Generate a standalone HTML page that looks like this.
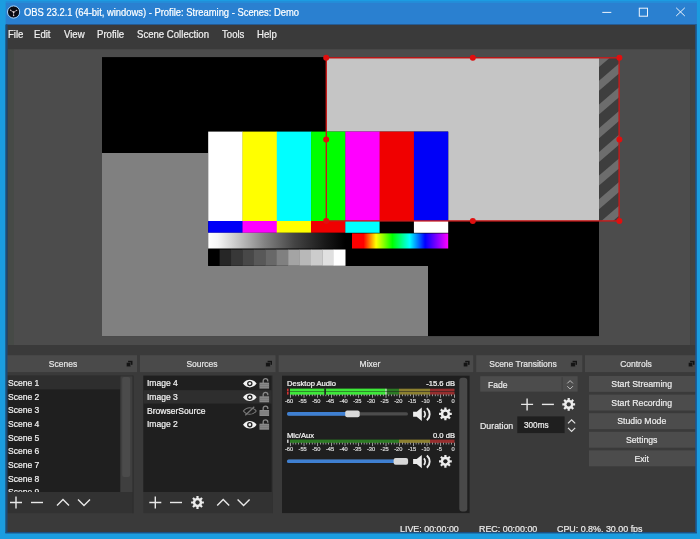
<!DOCTYPE html>
<html lang="en"><head><meta charset="utf-8"><title>OBS 23.2.1</title>
<style>
html,body{margin:0;padding:0}
body{width:700px;height:539px;position:relative;overflow:hidden;background:#3a3a3a;font-family:"Liberation Sans",sans-serif;color:#e6e6e6;font-size:8.8px;line-height:1}
span{position:absolute;white-space:nowrap;line-height:1;-webkit-text-stroke:0.22px}
svg{position:absolute;left:0;top:0}
#txt{position:absolute;left:0;top:0;width:700px;height:539px;overflow:hidden;will-change:transform}
.ic{stroke:#e8e8e8;stroke-width:1.4;fill:none}
</style></head><body>
<svg width="700" height="539" viewBox="0 0 700 539">
<rect x="8.00" y="49.00" width="682.40" height="296.00" fill="#4c4c4c"/>
<rect x="8.00" y="49.00" width="6.00" height="296.00" fill="#464a46"/>
<rect x="690.20" y="49.00" width="5.30" height="296.00" fill="#434343"/>
<rect x="102.00" y="57.10" width="497.00" height="279.00" fill="#000"/>
<rect x="102.00" y="153.00" width="326.00" height="183.10" fill="#808080"/>
<rect x="327.00" y="58.00" width="272.00" height="163.00" fill="#c5c5c5"/>
<rect x="208.20" y="131.60" width="240.00" height="134.40" fill="#000"/>
<rect x="208.20" y="131.60" width="34.59" height="89.60" fill="#ffffff"/>
<rect x="242.49" y="131.60" width="34.59" height="89.60" fill="#ffff00"/>
<rect x="276.77" y="131.60" width="34.59" height="89.60" fill="#00ffff"/>
<rect x="311.06" y="131.60" width="34.59" height="89.60" fill="#00ff00"/>
<rect x="345.34" y="131.60" width="34.59" height="89.60" fill="#ff00ff"/>
<rect x="379.63" y="131.60" width="34.59" height="89.60" fill="#f00000"/>
<rect x="413.91" y="131.60" width="34.29" height="89.60" fill="#0000f8"/>
<rect x="208.20" y="221.00" width="34.59" height="11.80" fill="#0000f8"/>
<rect x="242.49" y="221.00" width="34.59" height="11.80" fill="#ff00ff"/>
<rect x="276.77" y="221.00" width="34.59" height="11.80" fill="#ffff00"/>
<rect x="311.06" y="221.00" width="34.59" height="11.80" fill="#f00000"/>
<rect x="345.34" y="221.00" width="34.59" height="11.80" fill="#00ffff"/>
<rect x="379.63" y="221.00" width="34.59" height="11.80" fill="#000000"/>
<rect x="413.91" y="221.00" width="34.29" height="11.80" fill="#ffffff"/>
<defs><linearGradient id="gw"><stop offset="0" stop-color="#fff"/><stop offset="0.07" stop-color="#f6f6f6"/><stop offset="0.23" stop-color="#c0c0c0"/><stop offset="0.41" stop-color="#838383"/><stop offset="0.63" stop-color="#444"/><stop offset="0.85" stop-color="#191919"/><stop offset="1" stop-color="#000"/></linearGradient><linearGradient id="gr"><stop offset="0" stop-color="#f00"/><stop offset="0.12" stop-color="#f00"/><stop offset="0.25" stop-color="#ff0"/><stop offset="0.42" stop-color="#0f0"/><stop offset="0.6" stop-color="#0ff"/><stop offset="0.76" stop-color="#00f"/><stop offset="1" stop-color="#f0f"/></linearGradient><clipPath id="cs"><rect x="599" y="58" width="20" height="163"/></clipPath></defs>
<rect x="208.20" y="232.80" width="137.00" height="15.70" fill="url(#gw)"/>
<rect x="352.00" y="233.40" width="96.20" height="15.10" fill="url(#gr)"/>
<rect x="208.20" y="249.50" width="11.72" height="16.30" fill="rgb(0,0,0)"/>
<rect x="219.62" y="249.50" width="11.72" height="16.30" fill="rgb(38,38,38)"/>
<rect x="231.03" y="249.50" width="11.72" height="16.30" fill="rgb(56,56,56)"/>
<rect x="242.45" y="249.50" width="11.72" height="16.30" fill="rgb(72,72,72)"/>
<rect x="253.87" y="249.50" width="11.72" height="16.30" fill="rgb(88,88,88)"/>
<rect x="265.28" y="249.50" width="11.72" height="16.30" fill="rgb(104,104,104)"/>
<rect x="276.70" y="249.50" width="11.72" height="16.30" fill="rgb(128,128,128)"/>
<rect x="288.12" y="249.50" width="11.72" height="16.30" fill="rgb(164,164,164)"/>
<rect x="299.53" y="249.50" width="11.72" height="16.30" fill="rgb(184,184,184)"/>
<rect x="310.95" y="249.50" width="11.72" height="16.30" fill="rgb(204,204,204)"/>
<rect x="322.37" y="249.50" width="11.72" height="16.30" fill="rgb(224,224,224)"/>
<rect x="333.78" y="249.50" width="11.72" height="16.30" fill="rgb(255,255,255)"/>
<rect x="599.00" y="58.00" width="20.00" height="163.00" fill="#3e3e3e"/>
<g clip-path="url(#cs)" fill="#6d6d6d">
<polygon points="599,33.4 619,16.2 619,26.2 599,43.4"/>
<polygon points="599,57.1 619,39.9 619,49.9 599,67.1"/>
<polygon points="599,80.8 619,63.6 619,73.6 599,90.8"/>
<polygon points="599,104.5 619,87.3 619,97.3 599,114.5"/>
<polygon points="599,128.2 619,111.0 619,121.0 599,138.2"/>
<polygon points="599,151.9 619,134.7 619,144.7 599,161.9"/>
<polygon points="599,175.6 619,158.4 619,168.4 599,185.6"/>
<polygon points="599,199.3 619,182.1 619,192.1 599,209.3"/>
<polygon points="599,223.0 619,205.8 619,215.8 599,233.0"/>
<polygon points="599,246.7 619,229.5 619,239.5 599,256.7"/>
</g>
<rect x="326.3" y="57.8" width="292.8" height="163.1" fill="none" stroke="#c81a1a" stroke-width="1.4"/>
<circle cx="326.2" cy="57.7" r="3" fill="#e00f0f"/>
<circle cx="472.8" cy="57.7" r="3" fill="#e00f0f"/>
<circle cx="619.4" cy="57.7" r="3" fill="#e00f0f"/>
<circle cx="326.2" cy="139.4" r="3" fill="#e00f0f"/>
<circle cx="619.4" cy="139.4" r="3" fill="#e00f0f"/>
<circle cx="326.2" cy="220.9" r="3" fill="#e00f0f"/>
<circle cx="472.8" cy="220.9" r="3" fill="#e00f0f"/>
<circle cx="619.4" cy="220.9" r="3" fill="#e00f0f"/>
<rect x="0.00" y="0.00" width="700.00" height="24.60" fill="#2a80d0"/>
<rect x="0.00" y="0.00" width="700.00" height="1.60" fill="#1c9ce2"/>
<rect x="0.00" y="1.60" width="700.00" height="1.40" fill="#248cd8"/>
<rect x="5.60" y="24.00" width="691.00" height="1.20" fill="#245f9c"/>
<g transform="translate(13.6,12)"><circle r="6.1" fill="#0a0a12" stroke="#a8d4fa" stroke-width="1"/><path d="M0 0.2L-3 -1.7M0 0.2L3 -1.6M0 0.2V3.6" stroke="#a89a9e" stroke-width="0.9" stroke-linecap="round" fill="none"/><circle cx="0" cy="0.2" r="0.9" fill="#e8dcdc"/><circle cx="-3" cy="-1.7" r="0.7" fill="#c8bcbc"/><circle cx="3" cy="-1.6" r="0.7" fill="#c8bcbc"/><circle cx="0" cy="3.5" r="0.7" fill="#d8cccc"/></g>
<g stroke="#eef4fc" stroke-width="1" fill="none"><path d="M602.3 12.4h9"/><rect x="639.3" y="8.2" width="8.2" height="8"/><path d="M676.2 7.8l8.6 8.2M684.8 7.8l-8.6 8.2"/></g>
<rect x="6.00" y="24.90" width="690.00" height="24.30" fill="#3a3a3a"/>
<rect x="6.00" y="355.20" width="131.00" height="16.90" fill="#4a4a4a"/>
<g transform="translate(126.10000000000001,360.5)"><rect x="2" y="0.3" width="4.4" height="4" fill="#141414"/><rect x="0.2" y="2" width="4.4" height="4.3" fill="#141414" stroke="#4a4a4a" stroke-width="0.5"/></g>
<rect x="140.00" y="355.20" width="135.50" height="16.90" fill="#4a4a4a"/>
<g transform="translate(265.59999999999997,360.5)"><rect x="2" y="0.3" width="4.4" height="4" fill="#141414"/><rect x="0.2" y="2" width="4.4" height="4.3" fill="#141414" stroke="#4a4a4a" stroke-width="0.5"/></g>
<rect x="278.60" y="355.20" width="194.60" height="16.90" fill="#4a4a4a"/>
<g transform="translate(463.2,360.5)"><rect x="2" y="0.3" width="4.4" height="4" fill="#141414"/><rect x="0.2" y="2" width="4.4" height="4.3" fill="#141414" stroke="#4a4a4a" stroke-width="0.5"/></g>
<rect x="476.20" y="355.20" width="106.10" height="16.90" fill="#4a4a4a"/>
<g transform="translate(570.6,360.5)"><rect x="2" y="0.3" width="4.4" height="4" fill="#141414"/><rect x="0.2" y="2" width="4.4" height="4.3" fill="#141414" stroke="#4a4a4a" stroke-width="0.5"/></g>
<rect x="585.00" y="355.20" width="111.50" height="16.90" fill="#4a4a4a"/>
<g transform="translate(688.1,360.5)"><rect x="2" y="0.3" width="4.4" height="4" fill="#141414"/><rect x="0.2" y="2" width="4.4" height="4.3" fill="#141414" stroke="#4a4a4a" stroke-width="0.5"/></g>
<rect x="6.00" y="375.80" width="127.20" height="116.20" fill="#1f1f1f"/>
<rect x="6.00" y="375.80" width="114.30" height="13.60" fill="#2e2e2e"/>
<rect x="120.30" y="376.20" width="12.90" height="115.80" fill="#3f3f3f"/>
<rect x="122.2" y="377" width="8" height="100" rx="2" fill="#4b4b4b"/>
<rect x="143.30" y="375.60" width="128.50" height="116.40" fill="#1f1f1f"/>
<rect x="143.30" y="390.20" width="128.50" height="13.40" fill="#2e2e2e"/>
<g transform="translate(242.8,379.6)"><path d="M0.2 4C2.2 1.2 4.6 0.2 7 0.2S11.8 1.2 13.8 4C11.8 6.8 9.4 7.8 7 7.8S2.2 6.8 0.2 4Z" fill="#f2f2f2"/><circle cx="7" cy="4" r="2.7" fill="#1f1f1f"/><circle cx="7" cy="4" r="1.35" fill="#f2f2f2"/></g>
<g transform="translate(259,378.0)"><path d="M4.2 5V2.9C4.2 1.4 5.2 0.7 6.5 0.7S8.8 1.4 8.8 2.9V3.6" fill="none" stroke="#8a8a8a" stroke-width="1.3"/><rect x="0.5" y="4.6" width="9.6" height="6" fill="#8a8a8a"/><path d="M0.5 6.6h9.6M0.5 8.6h9.6" stroke="#6c6c6c" stroke-width="0.6"/></g>
<g transform="translate(242.8,393.3)"><path d="M0.2 4C2.2 1.2 4.6 0.2 7 0.2S11.8 1.2 13.8 4C11.8 6.8 9.4 7.8 7 7.8S2.2 6.8 0.2 4Z" fill="#f2f2f2"/><circle cx="7" cy="4" r="2.7" fill="#1f1f1f"/><circle cx="7" cy="4" r="1.35" fill="#f2f2f2"/></g>
<g transform="translate(259,391.7)"><path d="M4.2 5V2.9C4.2 1.4 5.2 0.7 6.5 0.7S8.8 1.4 8.8 2.9V3.6" fill="none" stroke="#8a8a8a" stroke-width="1.3"/><rect x="0.5" y="4.6" width="9.6" height="6" fill="#8a8a8a"/><path d="M0.5 6.6h9.6M0.5 8.6h9.6" stroke="#6c6c6c" stroke-width="0.6"/></g>
<g transform="translate(242.8,407.0)"><path d="M0.6 4C2.4 1.6 4.6 0.7 7 0.7S11.6 1.6 13.4 4C11.6 6.4 9.4 7.3 7 7.3S2.4 6.4 0.6 4Z" fill="none" stroke="#7a7a7a" stroke-width="1.1"/><path d="M2.5 8.2L11.5 -0.2" stroke="#7a7a7a" stroke-width="1.2"/></g>
<g transform="translate(259,405.4)"><path d="M4.2 5V2.9C4.2 1.4 5.2 0.7 6.5 0.7S8.8 1.4 8.8 2.9V3.6" fill="none" stroke="#8a8a8a" stroke-width="1.3"/><rect x="0.5" y="4.6" width="9.6" height="6" fill="#8a8a8a"/><path d="M0.5 6.6h9.6M0.5 8.6h9.6" stroke="#6c6c6c" stroke-width="0.6"/></g>
<g transform="translate(242.8,420.70000000000005)"><path d="M0.2 4C2.2 1.2 4.6 0.2 7 0.2S11.8 1.2 13.8 4C11.8 6.8 9.4 7.8 7 7.8S2.2 6.8 0.2 4Z" fill="#f2f2f2"/><circle cx="7" cy="4" r="2.7" fill="#1f1f1f"/><circle cx="7" cy="4" r="1.35" fill="#f2f2f2"/></g>
<g transform="translate(259,419.1)"><path d="M4.2 5V2.9C4.2 1.4 5.2 0.7 6.5 0.7S8.8 1.4 8.8 2.9V3.6" fill="none" stroke="#8a8a8a" stroke-width="1.3"/><rect x="0.5" y="4.6" width="9.6" height="6" fill="#8a8a8a"/><path d="M0.5 6.6h9.6M0.5 8.6h9.6" stroke="#6c6c6c" stroke-width="0.6"/></g>
<rect x="282.00" y="375.70" width="187.60" height="137.40" fill="#1f1f1f"/>
<rect x="459.3" y="377.8" width="8" height="133.8" rx="3" fill="#494949"/>
<rect x="290.00" y="388.70" width="109.00" height="2.70" fill="#2c7a24"/>
<rect x="399.00" y="388.70" width="31.00" height="2.70" fill="#8c8030"/>
<rect x="430.00" y="388.70" width="24.50" height="2.70" fill="#962e2e"/>
<rect x="290.00" y="388.70" width="95.50" height="2.70" fill="#3ee83a"/>
<rect x="385.50" y="388.70" width="1.00" height="2.70" fill="#fff"/>
<rect x="287.00" y="388.70" width="1.60" height="2.70" fill="#d03030"/>
<rect x="290.00" y="391.90" width="109.00" height="2.70" fill="#2c7a24"/>
<rect x="399.00" y="391.90" width="31.00" height="2.70" fill="#8c8030"/>
<rect x="430.00" y="391.90" width="24.50" height="2.70" fill="#962e2e"/>
<rect x="290.00" y="391.90" width="95.50" height="2.70" fill="#3ee83a"/>
<rect x="385.50" y="391.90" width="1.00" height="2.70" fill="#fff"/>
<rect x="287.00" y="391.90" width="1.60" height="2.70" fill="#d03030"/>
<rect x="290.00" y="394.40" width="0.70" height="3.40" fill="#d0d0d0"/>
<rect x="292.73" y="394.40" width="0.70" height="1.80" fill="#d0d0d0"/>
<rect x="295.47" y="394.40" width="0.70" height="1.80" fill="#d0d0d0"/>
<rect x="298.20" y="394.40" width="0.70" height="1.80" fill="#d0d0d0"/>
<rect x="300.93" y="394.40" width="0.70" height="1.80" fill="#d0d0d0"/>
<rect x="303.67" y="394.40" width="0.70" height="3.40" fill="#d0d0d0"/>
<rect x="306.40" y="394.40" width="0.70" height="1.80" fill="#d0d0d0"/>
<rect x="309.13" y="394.40" width="0.70" height="1.80" fill="#d0d0d0"/>
<rect x="311.87" y="394.40" width="0.70" height="1.80" fill="#d0d0d0"/>
<rect x="314.60" y="394.40" width="0.70" height="1.80" fill="#d0d0d0"/>
<rect x="317.33" y="394.40" width="0.70" height="3.40" fill="#d0d0d0"/>
<rect x="320.07" y="394.40" width="0.70" height="1.80" fill="#d0d0d0"/>
<rect x="322.80" y="394.40" width="0.70" height="1.80" fill="#d0d0d0"/>
<rect x="325.53" y="394.40" width="0.70" height="1.80" fill="#d0d0d0"/>
<rect x="328.27" y="394.40" width="0.70" height="1.80" fill="#d0d0d0"/>
<rect x="331.00" y="394.40" width="0.70" height="3.40" fill="#d0d0d0"/>
<rect x="333.73" y="394.40" width="0.70" height="1.80" fill="#d0d0d0"/>
<rect x="336.47" y="394.40" width="0.70" height="1.80" fill="#d0d0d0"/>
<rect x="339.20" y="394.40" width="0.70" height="1.80" fill="#d0d0d0"/>
<rect x="341.93" y="394.40" width="0.70" height="1.80" fill="#d0d0d0"/>
<rect x="344.67" y="394.40" width="0.70" height="3.40" fill="#d0d0d0"/>
<rect x="347.40" y="394.40" width="0.70" height="1.80" fill="#d0d0d0"/>
<rect x="350.13" y="394.40" width="0.70" height="1.80" fill="#d0d0d0"/>
<rect x="352.87" y="394.40" width="0.70" height="1.80" fill="#d0d0d0"/>
<rect x="355.60" y="394.40" width="0.70" height="1.80" fill="#d0d0d0"/>
<rect x="358.33" y="394.40" width="0.70" height="3.40" fill="#d0d0d0"/>
<rect x="361.07" y="394.40" width="0.70" height="1.80" fill="#d0d0d0"/>
<rect x="363.80" y="394.40" width="0.70" height="1.80" fill="#d0d0d0"/>
<rect x="366.53" y="394.40" width="0.70" height="1.80" fill="#d0d0d0"/>
<rect x="369.27" y="394.40" width="0.70" height="1.80" fill="#d0d0d0"/>
<rect x="372.00" y="394.40" width="0.70" height="3.40" fill="#d0d0d0"/>
<rect x="374.73" y="394.40" width="0.70" height="1.80" fill="#d0d0d0"/>
<rect x="377.47" y="394.40" width="0.70" height="1.80" fill="#d0d0d0"/>
<rect x="380.20" y="394.40" width="0.70" height="1.80" fill="#d0d0d0"/>
<rect x="382.93" y="394.40" width="0.70" height="1.80" fill="#d0d0d0"/>
<rect x="385.67" y="394.40" width="0.70" height="3.40" fill="#d0d0d0"/>
<rect x="388.40" y="394.40" width="0.70" height="1.80" fill="#d0d0d0"/>
<rect x="391.13" y="394.40" width="0.70" height="1.80" fill="#d0d0d0"/>
<rect x="393.87" y="394.40" width="0.70" height="1.80" fill="#d0d0d0"/>
<rect x="396.60" y="394.40" width="0.70" height="1.80" fill="#d0d0d0"/>
<rect x="399.33" y="394.40" width="0.70" height="3.40" fill="#d0d0d0"/>
<rect x="402.07" y="394.40" width="0.70" height="1.80" fill="#d0d0d0"/>
<rect x="404.80" y="394.40" width="0.70" height="1.80" fill="#d0d0d0"/>
<rect x="407.53" y="394.40" width="0.70" height="1.80" fill="#d0d0d0"/>
<rect x="410.27" y="394.40" width="0.70" height="1.80" fill="#d0d0d0"/>
<rect x="413.00" y="394.40" width="0.70" height="3.40" fill="#d0d0d0"/>
<rect x="415.73" y="394.40" width="0.70" height="1.80" fill="#d0d0d0"/>
<rect x="418.47" y="394.40" width="0.70" height="1.80" fill="#d0d0d0"/>
<rect x="421.20" y="394.40" width="0.70" height="1.80" fill="#d0d0d0"/>
<rect x="423.93" y="394.40" width="0.70" height="1.80" fill="#d0d0d0"/>
<rect x="426.67" y="394.40" width="0.70" height="3.40" fill="#d0d0d0"/>
<rect x="429.40" y="394.40" width="0.70" height="1.80" fill="#d0d0d0"/>
<rect x="432.13" y="394.40" width="0.70" height="1.80" fill="#d0d0d0"/>
<rect x="434.87" y="394.40" width="0.70" height="1.80" fill="#d0d0d0"/>
<rect x="437.60" y="394.40" width="0.70" height="1.80" fill="#d0d0d0"/>
<rect x="440.33" y="394.40" width="0.70" height="3.40" fill="#d0d0d0"/>
<rect x="443.07" y="394.40" width="0.70" height="1.80" fill="#d0d0d0"/>
<rect x="445.80" y="394.40" width="0.70" height="1.80" fill="#d0d0d0"/>
<rect x="448.53" y="394.40" width="0.70" height="1.80" fill="#d0d0d0"/>
<rect x="451.27" y="394.40" width="0.70" height="1.80" fill="#d0d0d0"/>
<rect x="454.00" y="394.40" width="0.70" height="3.40" fill="#d0d0d0"/>
<rect x="287" y="412.2" width="121" height="3.4" rx="1.7" fill="#4c4c4c"/>
<rect x="287" y="412.09999999999997" width="60.19999999999999" height="3.6" rx="1.7" fill="#3f80d2"/>
<rect x="345.2" y="410.5" width="14.5" height="6.8" rx="2" fill="#d8d8d8"/>
<g transform="translate(412.6,406.7)"><path d="M0.5 5h3.6L9.2 0.8V14.2L4.1 10H0.5Z" fill="#ececec"/><path d="M11.3 4.3C13 6 13 9 11.3 10.7" fill="none" stroke="#ececec" stroke-width="1.7"/><path d="M14.3 1.4C18 4.7 18 10.3 14.3 13.6" fill="none" stroke="#ececec" stroke-width="1.9"/></g>
<polygon points="451.80,412.78 451.80,415.02 449.97,415.00 449.41,416.36 450.72,417.64 449.14,419.22 447.86,417.91 446.50,418.47 446.52,420.30 444.28,420.30 444.30,418.47 442.94,417.91 441.66,419.22 440.08,417.64 441.39,416.36 440.83,415.00 439.00,415.02 439.00,412.78 440.83,412.80 441.39,411.44 440.08,410.16 441.66,408.58 442.94,409.89 444.30,409.33 444.28,407.50 446.52,407.50 446.50,409.33 447.86,409.89 449.14,408.58 450.72,410.16 449.41,411.44 449.97,412.80" fill="#ececec"/><circle cx="445.4" cy="413.9" r="2.15" fill="#1f1f1f"/>
<rect x="290.00" y="439.60" width="109.00" height="3.30" fill="#2c7a24"/>
<rect x="399.00" y="439.60" width="31.00" height="3.30" fill="#8c8030"/>
<rect x="430.00" y="439.60" width="24.50" height="3.30" fill="#962e2e"/>
<rect x="287.00" y="439.60" width="1.60" height="3.30" fill="#c8c8c8"/>
<rect x="290.00" y="442.70" width="0.70" height="3.40" fill="#d0d0d0"/>
<rect x="292.73" y="442.70" width="0.70" height="1.80" fill="#d0d0d0"/>
<rect x="295.47" y="442.70" width="0.70" height="1.80" fill="#d0d0d0"/>
<rect x="298.20" y="442.70" width="0.70" height="1.80" fill="#d0d0d0"/>
<rect x="300.93" y="442.70" width="0.70" height="1.80" fill="#d0d0d0"/>
<rect x="303.67" y="442.70" width="0.70" height="3.40" fill="#d0d0d0"/>
<rect x="306.40" y="442.70" width="0.70" height="1.80" fill="#d0d0d0"/>
<rect x="309.13" y="442.70" width="0.70" height="1.80" fill="#d0d0d0"/>
<rect x="311.87" y="442.70" width="0.70" height="1.80" fill="#d0d0d0"/>
<rect x="314.60" y="442.70" width="0.70" height="1.80" fill="#d0d0d0"/>
<rect x="317.33" y="442.70" width="0.70" height="3.40" fill="#d0d0d0"/>
<rect x="320.07" y="442.70" width="0.70" height="1.80" fill="#d0d0d0"/>
<rect x="322.80" y="442.70" width="0.70" height="1.80" fill="#d0d0d0"/>
<rect x="325.53" y="442.70" width="0.70" height="1.80" fill="#d0d0d0"/>
<rect x="328.27" y="442.70" width="0.70" height="1.80" fill="#d0d0d0"/>
<rect x="331.00" y="442.70" width="0.70" height="3.40" fill="#d0d0d0"/>
<rect x="333.73" y="442.70" width="0.70" height="1.80" fill="#d0d0d0"/>
<rect x="336.47" y="442.70" width="0.70" height="1.80" fill="#d0d0d0"/>
<rect x="339.20" y="442.70" width="0.70" height="1.80" fill="#d0d0d0"/>
<rect x="341.93" y="442.70" width="0.70" height="1.80" fill="#d0d0d0"/>
<rect x="344.67" y="442.70" width="0.70" height="3.40" fill="#d0d0d0"/>
<rect x="347.40" y="442.70" width="0.70" height="1.80" fill="#d0d0d0"/>
<rect x="350.13" y="442.70" width="0.70" height="1.80" fill="#d0d0d0"/>
<rect x="352.87" y="442.70" width="0.70" height="1.80" fill="#d0d0d0"/>
<rect x="355.60" y="442.70" width="0.70" height="1.80" fill="#d0d0d0"/>
<rect x="358.33" y="442.70" width="0.70" height="3.40" fill="#d0d0d0"/>
<rect x="361.07" y="442.70" width="0.70" height="1.80" fill="#d0d0d0"/>
<rect x="363.80" y="442.70" width="0.70" height="1.80" fill="#d0d0d0"/>
<rect x="366.53" y="442.70" width="0.70" height="1.80" fill="#d0d0d0"/>
<rect x="369.27" y="442.70" width="0.70" height="1.80" fill="#d0d0d0"/>
<rect x="372.00" y="442.70" width="0.70" height="3.40" fill="#d0d0d0"/>
<rect x="374.73" y="442.70" width="0.70" height="1.80" fill="#d0d0d0"/>
<rect x="377.47" y="442.70" width="0.70" height="1.80" fill="#d0d0d0"/>
<rect x="380.20" y="442.70" width="0.70" height="1.80" fill="#d0d0d0"/>
<rect x="382.93" y="442.70" width="0.70" height="1.80" fill="#d0d0d0"/>
<rect x="385.67" y="442.70" width="0.70" height="3.40" fill="#d0d0d0"/>
<rect x="388.40" y="442.70" width="0.70" height="1.80" fill="#d0d0d0"/>
<rect x="391.13" y="442.70" width="0.70" height="1.80" fill="#d0d0d0"/>
<rect x="393.87" y="442.70" width="0.70" height="1.80" fill="#d0d0d0"/>
<rect x="396.60" y="442.70" width="0.70" height="1.80" fill="#d0d0d0"/>
<rect x="399.33" y="442.70" width="0.70" height="3.40" fill="#d0d0d0"/>
<rect x="402.07" y="442.70" width="0.70" height="1.80" fill="#d0d0d0"/>
<rect x="404.80" y="442.70" width="0.70" height="1.80" fill="#d0d0d0"/>
<rect x="407.53" y="442.70" width="0.70" height="1.80" fill="#d0d0d0"/>
<rect x="410.27" y="442.70" width="0.70" height="1.80" fill="#d0d0d0"/>
<rect x="413.00" y="442.70" width="0.70" height="3.40" fill="#d0d0d0"/>
<rect x="415.73" y="442.70" width="0.70" height="1.80" fill="#d0d0d0"/>
<rect x="418.47" y="442.70" width="0.70" height="1.80" fill="#d0d0d0"/>
<rect x="421.20" y="442.70" width="0.70" height="1.80" fill="#d0d0d0"/>
<rect x="423.93" y="442.70" width="0.70" height="1.80" fill="#d0d0d0"/>
<rect x="426.67" y="442.70" width="0.70" height="3.40" fill="#d0d0d0"/>
<rect x="429.40" y="442.70" width="0.70" height="1.80" fill="#d0d0d0"/>
<rect x="432.13" y="442.70" width="0.70" height="1.80" fill="#d0d0d0"/>
<rect x="434.87" y="442.70" width="0.70" height="1.80" fill="#d0d0d0"/>
<rect x="437.60" y="442.70" width="0.70" height="1.80" fill="#d0d0d0"/>
<rect x="440.33" y="442.70" width="0.70" height="3.40" fill="#d0d0d0"/>
<rect x="443.07" y="442.70" width="0.70" height="1.80" fill="#d0d0d0"/>
<rect x="445.80" y="442.70" width="0.70" height="1.80" fill="#d0d0d0"/>
<rect x="448.53" y="442.70" width="0.70" height="1.80" fill="#d0d0d0"/>
<rect x="451.27" y="442.70" width="0.70" height="1.80" fill="#d0d0d0"/>
<rect x="454.00" y="442.70" width="0.70" height="3.40" fill="#d0d0d0"/>
<rect x="287" y="459.6" width="121" height="3.4" rx="1.7" fill="#4c4c4c"/>
<rect x="287" y="459.5" width="108.60000000000002" height="3.6" rx="1.7" fill="#3f80d2"/>
<rect x="393.6" y="457.90000000000003" width="14.5" height="6.8" rx="2" fill="#d8d8d8"/>
<g transform="translate(412.6,454.1)"><path d="M0.5 5h3.6L9.2 0.8V14.2L4.1 10H0.5Z" fill="#ececec"/><path d="M11.3 4.3C13 6 13 9 11.3 10.7" fill="none" stroke="#ececec" stroke-width="1.7"/><path d="M14.3 1.4C18 4.7 18 10.3 14.3 13.6" fill="none" stroke="#ececec" stroke-width="1.9"/></g>
<polygon points="451.80,460.18 451.80,462.42 449.97,462.40 449.41,463.76 450.72,465.04 449.14,466.62 447.86,465.31 446.50,465.87 446.52,467.70 444.28,467.70 444.30,465.87 442.94,465.31 441.66,466.62 440.08,465.04 441.39,463.76 440.83,462.40 439.00,462.42 439.00,460.18 440.83,460.20 441.39,458.84 440.08,457.56 441.66,455.98 442.94,457.29 444.30,456.73 444.28,454.90 446.52,454.90 446.50,456.73 447.86,457.29 449.14,455.98 450.72,457.56 449.41,458.84 449.97,460.20" fill="#ececec"/><circle cx="445.4" cy="461.3" r="2.15" fill="#1f1f1f"/>
<rect x="324.30" y="388.40" width="1.60" height="6.40" fill="#1f1f1f"/>
<rect x="480.20" y="376.20" width="97.40" height="15.40" fill="#4c4c4c"/>
<rect x="561.70" y="377.20" width="0.80" height="13.40" fill="#3a3a3a"/>
<g transform="translate(566.1,378.8)"><path d="M1.2 4.6L4 1.8L6.8 4.6M1.2 7.4L4 10.2L6.8 7.4" fill="none" stroke="#c8c8c8" stroke-width="0.9"/></g>
<rect x="517.30" y="416.40" width="47.30" height="16.70" fill="#1f1f1f"/>
<g transform="translate(565.6,416.6)"><path d="M2.4 6.8L6 3.2L9.6 6.8M2.4 11.2L6 14.8L9.6 11.2" fill="none" stroke="#e0e0e0" stroke-width="1.2"/></g>
<rect x="589.00" y="376.00" width="107.00" height="15.90" fill="#4c4c4c"/>
<rect x="589.00" y="394.60" width="107.00" height="15.90" fill="#4c4c4c"/>
<rect x="589.00" y="413.20" width="107.00" height="15.90" fill="#4c4c4c"/>
<rect x="589.00" y="431.80" width="107.00" height="15.90" fill="#4c4c4c"/>
<rect x="589.00" y="450.40" width="107.00" height="15.90" fill="#4c4c4c"/>
</svg>
<div id="txt">
<span style="left:24.40px;top:8.22px;font-size:10.34px;color:#fff;transform:scaleX(0.9091);transform-origin:left center;">OBS 23.2.1 (64-bit, windows) - Profile: Streaming - Scenes: Demo</span>
<span style="left:7.50px;top:29.96px;font-size:10.46px;color:#f0f0f0;transform:scaleX(0.9174);transform-origin:left center;">File</span>
<span style="left:34.30px;top:29.96px;font-size:10.46px;color:#f0f0f0;transform:scaleX(0.9174);transform-origin:left center;">Edit</span>
<span style="left:64.10px;top:29.96px;font-size:10.46px;color:#f0f0f0;transform:scaleX(0.9174);transform-origin:left center;">View</span>
<span style="left:97.00px;top:29.96px;font-size:10.46px;color:#f0f0f0;transform:scaleX(0.9174);transform-origin:left center;">Profile</span>
<span style="left:137.10px;top:29.96px;font-size:10.46px;color:#f0f0f0;transform:scaleX(0.9174);transform-origin:left center;">Scene Collection</span>
<span style="left:222.10px;top:29.96px;font-size:10.46px;color:#f0f0f0;transform:scaleX(0.9174);transform-origin:left center;">Tools</span>
<span style="left:257.30px;top:29.96px;font-size:10.46px;color:#f0f0f0;transform:scaleX(0.9174);transform-origin:left center;">Help</span>
<span style="left:2.50px;top:359.93px;font-size:9.27px;color:#e6e6e6;width:120px;text-align:center;transform:scaleX(0.9174);transform-origin:center center;">Scenes</span>
<span style="left:141.50px;top:359.93px;font-size:9.27px;color:#e6e6e6;width:120px;text-align:center;transform:scaleX(0.9174);transform-origin:center center;">Sources</span>
<span style="left:309.60px;top:359.93px;font-size:9.27px;color:#e6e6e6;width:120px;text-align:center;transform:scaleX(0.9174);transform-origin:center center;">Mixer</span>
<span style="left:463.10px;top:359.93px;font-size:9.27px;color:#e6e6e6;width:120px;text-align:center;transform:scaleX(0.9174);transform-origin:center center;">Scene Transitions</span>
<span style="left:576.30px;top:359.93px;font-size:9.27px;color:#e6e6e6;width:120px;text-align:center;transform:scaleX(0.9174);transform-origin:center center;">Controls</span>
<span style="left:7.80px;top:378.92px;font-size:9.32px;color:#f2f2f2;transform:scaleX(0.9174);transform-origin:left center;">Scene 1</span>
<span style="left:7.80px;top:392.59px;font-size:9.32px;color:#f2f2f2;transform:scaleX(0.9174);transform-origin:left center;">Scene 2</span>
<span style="left:7.80px;top:406.26px;font-size:9.32px;color:#f2f2f2;transform:scaleX(0.9174);transform-origin:left center;">Scene 3</span>
<span style="left:7.80px;top:419.93px;font-size:9.32px;color:#f2f2f2;transform:scaleX(0.9174);transform-origin:left center;">Scene 4</span>
<span style="left:7.80px;top:433.60px;font-size:9.32px;color:#f2f2f2;transform:scaleX(0.9174);transform-origin:left center;">Scene 5</span>
<span style="left:7.80px;top:447.27px;font-size:9.32px;color:#f2f2f2;transform:scaleX(0.9174);transform-origin:left center;">Scene 6</span>
<span style="left:7.80px;top:460.94px;font-size:9.32px;color:#f2f2f2;transform:scaleX(0.9174);transform-origin:left center;">Scene 7</span>
<span style="left:7.80px;top:474.61px;font-size:9.32px;color:#f2f2f2;transform:scaleX(0.9174);transform-origin:left center;">Scene 8</span>
<span style="left:7.80px;top:488.28px;font-size:9.32px;color:#f2f2f2;transform:scaleX(0.9174);transform-origin:left center;">Scene 9</span>
<span style="left:146.70px;top:379.32px;font-size:9.32px;color:#f2f2f2;transform:scaleX(0.9174);transform-origin:left center;">Image 4</span>
<span style="left:146.70px;top:393.02px;font-size:9.32px;color:#f2f2f2;transform:scaleX(0.9174);transform-origin:left center;">Image 3</span>
<span style="left:146.70px;top:406.72px;font-size:9.32px;color:#f2f2f2;transform:scaleX(0.9174);transform-origin:left center;">BrowserSource</span>
<span style="left:146.70px;top:420.42px;font-size:9.32px;color:#f2f2f2;transform:scaleX(0.9174);transform-origin:left center;">Image 2</span>
<span style="left:287.00px;top:380.33px;font-size:7.07px;color:#f4f4f4;transform:scaleX(1.0753);transform-origin:left center;">Desktop Audio</span>
<span style="left:354.50px;top:380.33px;font-size:7.07px;color:#f4f4f4;width:100px;text-align:right;transform:scaleX(1.0753);transform-origin:right center;">-15.6 dB</span>
<span style="left:279.00px;top:399.20px;font-size:5.70px;color:#d8d8d8;width:20px;text-align:center;">-60</span>
<span style="left:292.67px;top:399.20px;font-size:5.70px;color:#d8d8d8;width:20px;text-align:center;">-55</span>
<span style="left:306.33px;top:399.20px;font-size:5.70px;color:#d8d8d8;width:20px;text-align:center;">-50</span>
<span style="left:320.00px;top:399.20px;font-size:5.70px;color:#d8d8d8;width:20px;text-align:center;">-45</span>
<span style="left:333.67px;top:399.20px;font-size:5.70px;color:#d8d8d8;width:20px;text-align:center;">-40</span>
<span style="left:347.33px;top:399.20px;font-size:5.70px;color:#d8d8d8;width:20px;text-align:center;">-35</span>
<span style="left:361.00px;top:399.20px;font-size:5.70px;color:#d8d8d8;width:20px;text-align:center;">-30</span>
<span style="left:374.67px;top:399.20px;font-size:5.70px;color:#d8d8d8;width:20px;text-align:center;">-25</span>
<span style="left:388.33px;top:399.20px;font-size:5.70px;color:#d8d8d8;width:20px;text-align:center;">-20</span>
<span style="left:402.00px;top:399.20px;font-size:5.70px;color:#d8d8d8;width:20px;text-align:center;">-15</span>
<span style="left:415.67px;top:399.20px;font-size:5.70px;color:#d8d8d8;width:20px;text-align:center;">-10</span>
<span style="left:429.33px;top:399.20px;font-size:5.70px;color:#d8d8d8;width:20px;text-align:center;">-5</span>
<span style="left:443.00px;top:399.20px;font-size:5.70px;color:#d8d8d8;width:20px;text-align:center;">0</span>
<span style="left:287.00px;top:431.63px;font-size:7.07px;color:#f4f4f4;transform:scaleX(1.0753);transform-origin:left center;">Mic/Aux</span>
<span style="left:354.50px;top:431.63px;font-size:7.07px;color:#f4f4f4;width:100px;text-align:right;transform:scaleX(1.0753);transform-origin:right center;">0.0 dB</span>
<span style="left:279.00px;top:446.70px;font-size:5.70px;color:#d8d8d8;width:20px;text-align:center;">-60</span>
<span style="left:292.67px;top:446.70px;font-size:5.70px;color:#d8d8d8;width:20px;text-align:center;">-55</span>
<span style="left:306.33px;top:446.70px;font-size:5.70px;color:#d8d8d8;width:20px;text-align:center;">-50</span>
<span style="left:320.00px;top:446.70px;font-size:5.70px;color:#d8d8d8;width:20px;text-align:center;">-45</span>
<span style="left:333.67px;top:446.70px;font-size:5.70px;color:#d8d8d8;width:20px;text-align:center;">-40</span>
<span style="left:347.33px;top:446.70px;font-size:5.70px;color:#d8d8d8;width:20px;text-align:center;">-35</span>
<span style="left:361.00px;top:446.70px;font-size:5.70px;color:#d8d8d8;width:20px;text-align:center;">-30</span>
<span style="left:374.67px;top:446.70px;font-size:5.70px;color:#d8d8d8;width:20px;text-align:center;">-25</span>
<span style="left:388.33px;top:446.70px;font-size:5.70px;color:#d8d8d8;width:20px;text-align:center;">-20</span>
<span style="left:402.00px;top:446.70px;font-size:5.70px;color:#d8d8d8;width:20px;text-align:center;">-15</span>
<span style="left:415.67px;top:446.70px;font-size:5.70px;color:#d8d8d8;width:20px;text-align:center;">-10</span>
<span style="left:429.33px;top:446.70px;font-size:5.70px;color:#d8d8d8;width:20px;text-align:center;">-5</span>
<span style="left:443.00px;top:446.70px;font-size:5.70px;color:#d8d8d8;width:20px;text-align:center;">0</span>
<span style="left:487.60px;top:380.62px;font-size:9.37px;color:#ececec;transform:scaleX(0.9174);transform-origin:left center;">Fade</span>
<span style="left:479.60px;top:420.91px;font-size:9.59px;color:#ececec;transform:scaleX(0.9174);transform-origin:left center;">Duration</span>
<span style="left:523.80px;top:421.04px;font-size:8.94px;color:#f0f0f0;transform:scaleX(0.9174);transform-origin:left center;">300ms</span>
<span style="left:589.00px;top:379.21px;font-size:9.54px;color:#ececec;width:105.4px;text-align:center;transform:scaleX(0.9174);transform-origin:center center;">Start Streaming</span>
<span style="left:589.00px;top:397.81px;font-size:9.54px;color:#ececec;width:105.4px;text-align:center;transform:scaleX(0.9174);transform-origin:center center;">Start Recording</span>
<span style="left:589.00px;top:416.41px;font-size:9.54px;color:#ececec;width:105.4px;text-align:center;transform:scaleX(0.9174);transform-origin:center center;">Studio Mode</span>
<span style="left:589.00px;top:435.01px;font-size:9.54px;color:#ececec;width:105.4px;text-align:center;transform:scaleX(0.9174);transform-origin:center center;">Settings</span>
<span style="left:589.00px;top:453.61px;font-size:9.54px;color:#ececec;width:105.4px;text-align:center;transform:scaleX(0.9174);transform-origin:center center;">Exit</span>
<span style="left:399.70px;top:524.93px;font-size:9.17px;color:#ececec;transform:scaleX(0.9709);transform-origin:left center;">LIVE: 00:00:00</span>
<span style="left:478.60px;top:524.93px;font-size:9.17px;color:#ececec;transform:scaleX(0.9709);transform-origin:left center;">REC: 00:00:00</span>
<span style="left:557.40px;top:524.93px;font-size:9.17px;color:#ececec;transform:scaleX(0.9709);transform-origin:left center;">CPU: 0.8%, 30.00 fps</span>
</div>
<svg width="700" height="539" viewBox="0 0 700 539">
<rect x="6.00" y="492.00" width="127.20" height="21.20" fill="#323232"/>
<rect x="132.40" y="375.80" width="1.20" height="137.40" fill="#2f2f2f"/>
<rect x="143.30" y="492.00" width="128.50" height="21.20" fill="#323232"/>
<rect x="271.80" y="375.60" width="1.20" height="137.60" fill="#313131"/>
<path class="ic" d="M10 502.5h12M16 496.5v12"/><path class="ic" d="M31 502.5h12"/><path class="ic" d="M57 505.5L63 499.5L69 505.5"/><path class="ic" d="M78 499.5L84 505.5L90 499.5"/>
<path class="ic" d="M149.3 502.5h12M155.3 496.5v12"/><path class="ic" d="M170 502.5h12"/><polygon points="203.90,501.38 203.90,503.62 202.07,503.60 201.51,504.96 202.82,506.24 201.24,507.82 199.96,506.51 198.60,507.07 198.62,508.90 196.38,508.90 196.40,507.07 195.04,506.51 193.76,507.82 192.18,506.24 193.49,504.96 192.93,503.60 191.10,503.62 191.10,501.38 192.93,501.40 193.49,500.04 192.18,498.76 193.76,497.18 195.04,498.49 196.40,497.93 196.38,496.10 198.62,496.10 198.60,497.93 199.96,498.49 201.24,497.18 202.82,498.76 201.51,500.04 202.07,501.40" fill="#ececec"/><circle cx="197.5" cy="502.5" r="2.15" fill="#323232"/><path class="ic" d="M217.2 505.5L223.2 499.5L229.2 505.5"/><path class="ic" d="M237.6 499.5L243.6 505.5L249.6 499.5"/>
<path class="ic" d="M521.1 404.4h12M527.1 398.4v12"/><path class="ic" d="M541.9 404.4h12"/><polygon points="575.10,403.28 575.10,405.52 573.27,405.50 572.71,406.86 574.02,408.14 572.44,409.72 571.16,408.41 569.80,408.97 569.82,410.80 567.58,410.80 567.60,408.97 566.24,408.41 564.96,409.72 563.38,408.14 564.69,406.86 564.13,405.50 562.30,405.52 562.30,403.28 564.13,403.30 564.69,401.94 563.38,400.66 564.96,399.08 566.24,400.39 567.60,399.83 567.58,398.00 569.82,398.00 569.80,399.83 571.16,400.39 572.44,399.08 574.02,400.66 572.71,401.94 573.27,403.30" fill="#ececec"/><circle cx="568.7" cy="404.4" r="2.15" fill="#3a3a3a"/>
<rect x="0.00" y="0.00" width="5.60" height="539.00" fill="#1b9de0"/>
<rect x="5.60" y="24.60" width="1.90" height="509.00" fill="#1c4a78"/>
<rect x="695.30" y="24.60" width="1.80" height="509.00" fill="#1c5a94"/>
<rect x="696.90" y="0.00" width="3.10" height="539.00" fill="#1b9de0"/>
<rect x="5.60" y="532.00" width="691.00" height="1.60" fill="#1c4f84"/>
<rect x="0.00" y="533.40" width="700.00" height="5.60" fill="#1b9de0"/>
</svg>
</body></html>
